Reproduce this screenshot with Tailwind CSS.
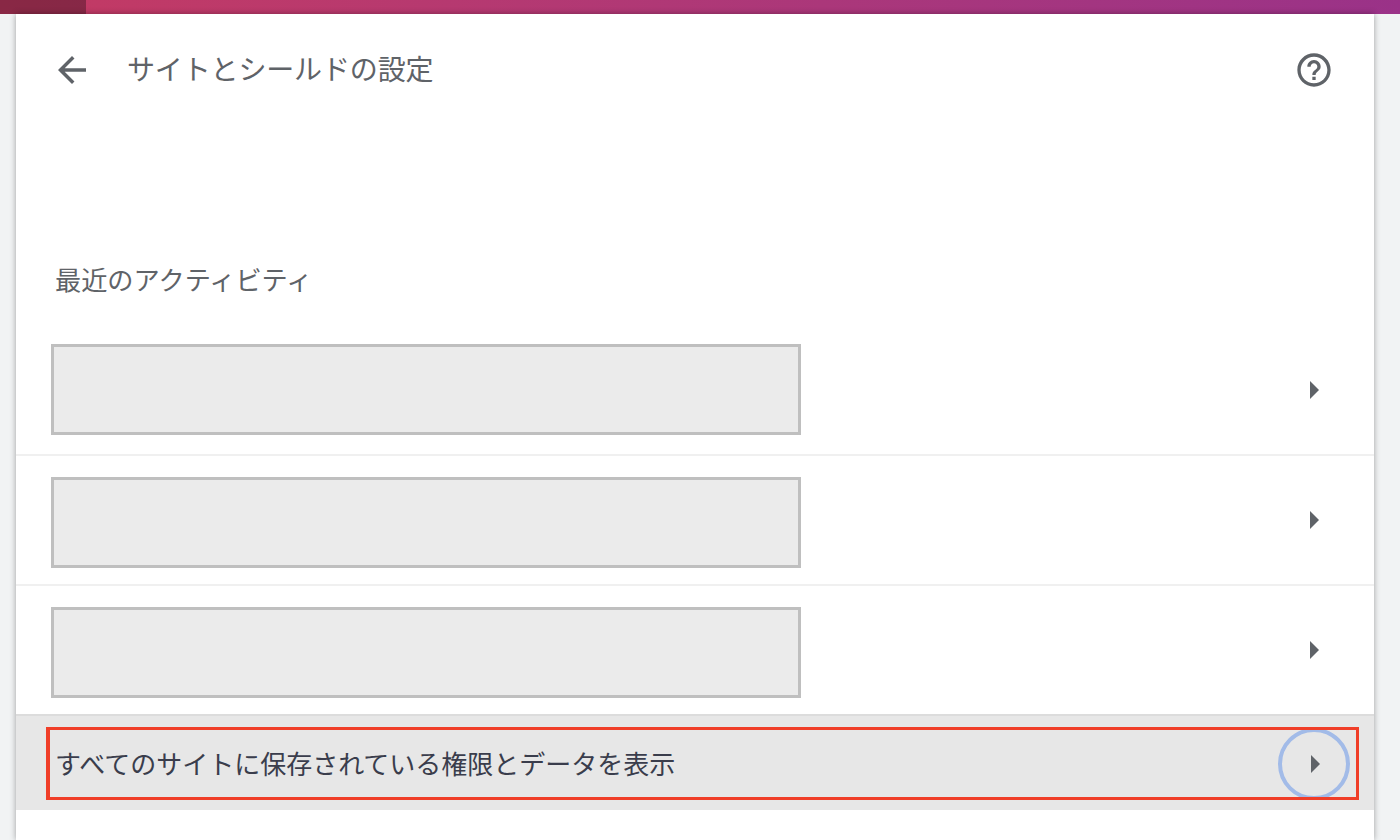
<!doctype html>
<html lang="ja">
<head>
<meta charset="utf-8">
<script src="https://cdn.jsdelivr.net/npm/@tailwindcss/browser@4"></script>
</head>
<body class="h-[840px] w-[1400px] overflow-hidden bg-[#f1f3f4] font-['Noto_Sans_CJK_JP','Hiragino_Sans',sans-serif]">
  <div class="flex h-[14px] bg-gradient-to-r from-[#c43a63] to-[#9a3288]">
    <div class="h-full w-[86px] bg-black/30"></div>
  </div>
  <main class="mx-4 h-[826px] w-[1358px] bg-white shadow-[0_0_6px_rgba(0,0,0,0.35)]">
    <header class="flex h-[112px] items-center pb-[1px] pl-[35px] pr-[40px]">
      <svg class="h-[42px] w-[42px]" viewBox="0 0 24 24" fill="#5f6368"><path d="M20 11H7.83l5.59-5.59L12 4l-8 8 8 8 1.41-1.41L7.83 13H20v-2z"/></svg>
      <h1 class="ml-[34px] flex-1 pb-[4px] text-[28px] leading-[40px] font-normal tracking-[-0.15px] text-[#5f6368]">サイトとシールドの設定</h1>
      <svg class="h-[40px] w-[40px]" viewBox="0 0 24 24" fill="#5f6368"><path d="M11 18h2v-2h-2v2zm1-16C6.48 2 2 6.48 2 12s4.48 10 10 10 10-4.48 10-10S17.52 2 12 2zm0 18c-4.41 0-8-3.59-8-8s3.59-8 8-8 8 3.59 8 8-3.59 8-8 8zm0-14c-2.21 0-4 1.79-4 4h2c0-1.1.9-2 2-2s2 .9 2 2c0 2-3 1.75-3 5h2c0-2.25 3-2.5 3-5 0-2.21-1.79-4-4-4z"/></svg>
    </header>
    <h2 class="mt-[135px] pl-[39px] text-[26.2px] leading-[36px] font-normal text-[#5f6368]">最近のアクティビティ</h2>
    <section class="mt-[29px]">
      <div class="flex h-[130px] border-b-2 border-[#f0f0f0] pl-[35px] pr-[54px]">
        <div class="mt-[18px] h-[91px] w-[750px] border-[3px] border-[#bfbfbf] bg-[#ebebeb]"></div>
        <svg class="ml-auto h-[24px] w-[14px] self-center" viewBox="0 0 14 24" fill="#5f6368"><path d="M4 3l9 9-9 9z"/></svg>
      </div>
      <div class="flex h-[130px] border-b-2 border-[#f0f0f0] pl-[35px] pr-[54px]">
        <div class="mt-[21px] h-[91px] w-[750px] border-[3px] border-[#bfbfbf] bg-[#ebebeb]"></div>
        <svg class="ml-auto h-[24px] w-[14px] self-center" viewBox="0 0 14 24" fill="#5f6368"><path d="M4 3l9 9-9 9z"/></svg>
      </div>
      <div class="flex h-[128px] pl-[35px] pr-[54px]">
        <div class="mt-[21px] h-[91px] w-[750px] border-[3px] border-[#bfbfbf] bg-[#ebebeb]"></div>
        <svg class="ml-auto h-[24px] w-[14px] self-center" viewBox="0 0 14 24" fill="#5f6368"><path d="M4 3l9 9-9 9z"/></svg>
      </div>
      <div class="h-[96px] border-t-2 border-[#dcdcdc] bg-[#e7e7e7] pl-[30px] pr-[15px] pt-[11px]">
        <div class="relative flex h-[73px] items-center overflow-hidden border-[3px] border-l-4 border-[#f03e28] pl-[5px]">
          <span class="flex-1 pb-[1px] text-[26px] leading-[36px] text-[#3a3d4c]">すべてのサイトに保存されている権限とデータを表示</span>
          <span class="absolute left-[1228px] top-[-2px] flex h-[72px] w-[72px] items-center justify-center rounded-full border-4 border-[#a2bbe8]">
            <svg class="h-[24px] w-[14px]" viewBox="0 0 14 24" fill="#5f6368"><path d="M4 3l9 9-9 9z"/></svg>
          </span>
        </div>
      </div>
    </section>
  </main>
</body>
</html>
